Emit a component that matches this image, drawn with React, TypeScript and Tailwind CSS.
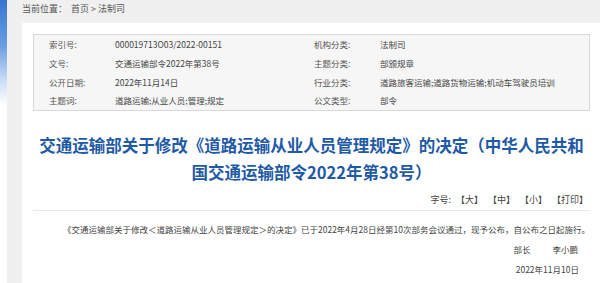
import React from "react";

const rows: [string, string, string, string][] = [
  ["索引号:", "000019713O03/2022-00151", "机构分类:", "法制司"],
  ["文号:", "交通运输部令2022年第38号", "主题分类:", "部颁规章"],
  ["公开日期:", "2022年11月14日", "行业分类:", "道路旅客运输;道路货物运输;机动车驾驶员培训"],
  ["主题词:", "道路运输;从业人员;管理;规定", "公文类型:", "部令"],
];

export default function App() {
  return (
    <div
      className="flex min-h-[283px] h-[283px] overflow-hidden bg-[#f0f0f0]"
      style={{ fontFamily: '"Noto Sans CJK SC", "Noto Sans", sans-serif' }}
    >
      <div className="w-[7px] shrink-0 bg-[linear-gradient(to_bottom,#3676d0_0px,#6a9be0_45px,#c9dcf5_80px,#ffffff_105px,#ffffff_100%)]" />
      <div className="flex-1 pl-[15px] pr-[10px] flex flex-col">
        <div className="h-[23px] flex items-center text-[9px] text-[#555] pb-[6px]">
          <span>当前位置：</span>
          <span className="ml-[4px]">首页 &gt; 法制司</span>
        </div>
        <div className="flex-1 bg-white px-[11px] pt-[11px]">
          <div className="border border-[#d8d8d8] bg-[#f6f6f6] pl-[15px] py-0 h-[77px] flex flex-col text-[8.5px] text-[#444]">
            {rows.map((r, i) => (
              <div key={i} className="grid grid-cols-[66px_199px_66px_1fr] h-[19px] items-center">
                <span className="text-[#555]">{r[0]}</span>
                <span>{r[1]}</span>
                <span className="text-[#555]">{r[2]}</span>
                <span>{r[3]}</span>
              </div>
            ))}
          </div>
          <h1 className="mt-[21px] text-center text-[16.5px] leading-[27px] font-bold text-[#1f5aa6]">
            交通运输部关于修改《道路运输从业人员管理规定》的决定（中华人民共和
            <br />
            国交通运输部令2022年第38号）
          </h1>
          <div className="mt-[7px] flex justify-end items-center gap-[5px] pr-[2px] text-[9px] text-[#444] leading-[14px]">
            <span>字号:</span>
            <span>【大】</span>
            <span>【中】</span>
            <span>【小】</span>
            <span>【打印】</span>
          </div>
          <div className="mt-[3px] h-px bg-[#e8e8e8]" />
          <p className="mt-[12px] pl-[30px] text-[8.5px] leading-[12px] text-[#444] whitespace-nowrap">
            《交通运输部关于修改＜道路运输从业人员管理规定＞的决定》已于2022年4月28日经第10次部务会议通过，现予公布，自公布之日起施行。
          </p>
          <div className="mt-[8px] flex justify-end pr-[12px] text-[8.5px] leading-[12px] text-[#444]">
            <span>部长</span>
            <span className="ml-[22px]">李小鹏</span>
          </div>
          <div className="mt-[8px] flex justify-end pr-[11px] text-[8.5px] leading-[12px] text-[#444]">
            2022年11月10日
          </div>
        </div>
      </div>
    </div>
  );
}
